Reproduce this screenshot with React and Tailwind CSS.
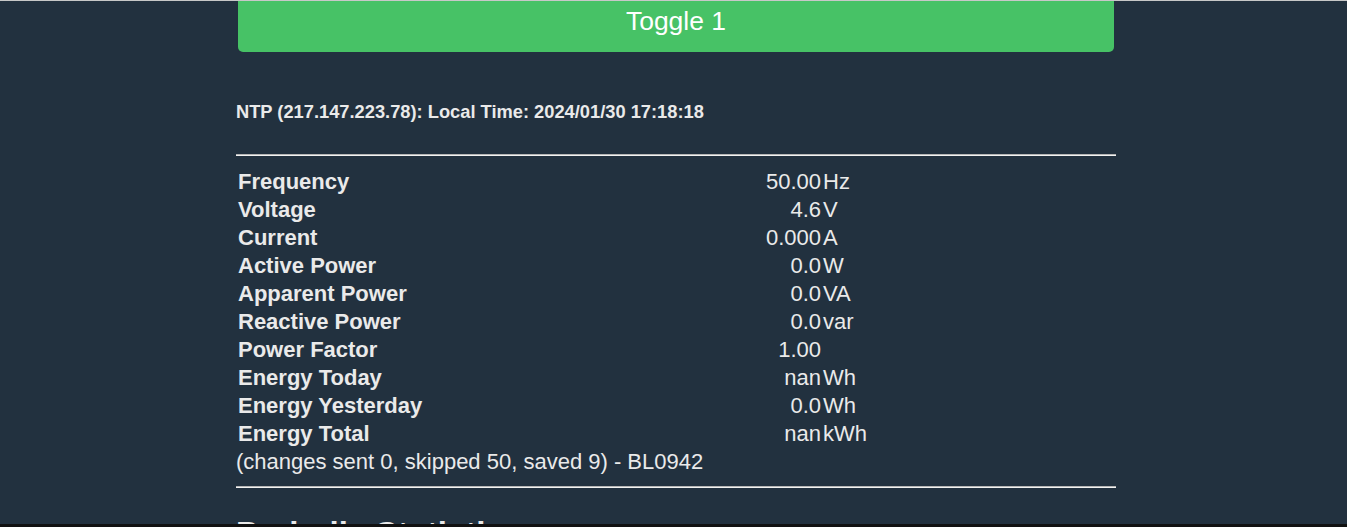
import React from 'react';

const readings = [
  { label: 'Frequency', value: '50.00', unit: 'Hz' },
  { label: 'Voltage', value: '4.6', unit: 'V' },
  { label: 'Current', value: '0.000', unit: 'A' },
  { label: 'Active Power', value: '0.0', unit: 'W' },
  { label: 'Apparent Power', value: '0.0', unit: 'VA' },
  { label: 'Reactive Power', value: '0.0', unit: 'var' },
  { label: 'Power Factor', value: '1.00', unit: '' },
  { label: 'Energy Today', value: 'nan', unit: 'Wh' },
  { label: 'Energy Yesterday', value: '0.0', unit: 'Wh' },
  { label: 'Energy Total', value: 'nan', unit: 'kWh' },
];

function Rule() {
  return <div className="h-[2px] border-t border-[#b5b5b5] bg-[#f2f2f2]" />;
}

export default function App() {
  return (
    <div className="h-[527px] overflow-hidden flex flex-col bg-[#22313f] text-[#eaeaea] font-['Liberation_Sans',Arial,sans-serif]">
      <div className="h-px bg-[#c8c8c8]" />

      <div className="flex-1 overflow-hidden">
        <div className="w-[880px] ml-[236px]">
          {/* Toggle button (scrolled, only the lower part shows) */}
          <div className="mx-[2px] h-[51px] bg-[#47c266] rounded-b-[5px] text-center text-white text-[26.5px] leading-[30px] pt-[5px]">
            Toggle 1
          </div>

          <div className="mt-[48px] text-[18.3px] leading-[24px] font-bold">
            NTP (217.147.223.78): Local Time: 2024/01/30 17:18:18
          </div>

          <div className="mt-[30px]">
            <Rule />
          </div>

          {/* Energy readings */}
          <div className="mt-[12px] text-[22px] leading-[28px]">
            {readings.map(r => (
              <div key={r.label} className="flex">
                <div className="w-[526px] pl-[2px] font-bold">{r.label}</div>
                <div className="w-[59px] text-right">{r.value}</div>
                <div className="pl-[2px]">{r.unit}</div>
              </div>
            ))}
            <div>(changes sent 0, skipped 50, saved 9) - BL0942</div>
          </div>

          <div className="mt-[10px]">
            <Rule />
          </div>

          <h2 className="mt-[27px] text-[33px] leading-[38px] font-bold">
            Periodic Statistics
          </h2>
        </div>
      </div>

      <div className="h-[3px] bg-[#111]" />
    </div>
  );
}
